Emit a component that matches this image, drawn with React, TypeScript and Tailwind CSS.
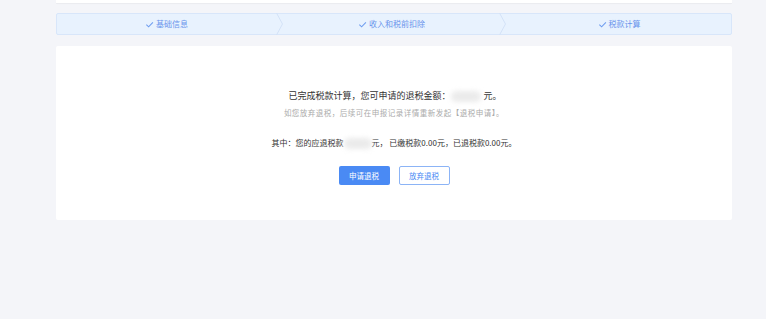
import React from "react";

const Check = () => (
  <svg width="9" height="9" viewBox="0 0 10 10" className="mr-[2px] inline-block">
    <path d="M1.5 5.2 L4 7.6 L8.8 2.6" fill="none" stroke="#6f9df0" strokeWidth="1.2" />
  </svg>
);

const Chevron = () => (
  <svg width="8" height="22" viewBox="0 0 8 22" className="shrink-0">
    <path d="M0.5 0 L6.5 11 L0.5 22" fill="none" stroke="#d3e2f7" strokeWidth="1" />
  </svg>
);

const Blur = ({ w }: { w: number }) => (
  <span
    className="inline-block h-[11px] rounded-full bg-[#ebebeb] blur-[2.5px] align-middle"
    style={{ width: w }}
  />
);

export default function App() {
  const font = { fontFamily: '"Noto Sans CJK SC", "Noto Sans", sans-serif' };
  return (
    <div className="w-[766px] h-[319px] bg-[#f4f5f9] overflow-hidden" style={font}>
      <div className="mx-[56px] w-[676px]">
        <div className="h-[3px] bg-white shadow-[0_1px_1px_rgba(0,0,0,0.04)]" />
        <div className="mt-[10px] h-[22px] flex items-center rounded-[2px] border border-[#d8e6fa] bg-[#e8f2fe] text-[8px] text-[#6894ec]">
          <div className="w-[219px] flex items-center justify-center">
            <Check />基础信息
          </div>
          <Chevron />
          <div className="flex-1 flex items-center justify-center">
            <Check />收入和税前扣除
          </div>
          <Chevron />
          <div className="w-[224px] flex items-center justify-center">
            <Check />税款计算
          </div>
        </div>
        <div className="mt-[11px] h-[174px] bg-white rounded-[2px] flex flex-col items-center">
          <div className="mt-[43px] h-[14px] flex items-center text-[9px] text-[#333333] pl-[2px]">
            已完成税款计算，您可申请的退税金额：
            <Blur w={30} />
            <span className="ml-[3px]">元。</span>
          </div>
          <div className="mt-[4px] h-[12px] flex items-center text-[7.5px] tracking-[0.5px] text-[#ababab]">
            如您放弃退税，后续可在申报记录详情重新发起【退税申请】。
          </div>
          <div className="mt-[18px] h-[12px] flex items-center text-[8px] text-[#333333]">
            其中：您的应退税款
            <Blur w={28} />
            元， 已缴税款0.00元，已退税款0.00元。
          </div>
          <div className="mt-[17px] flex gap-[9px]">
            <button className="w-[51px] h-[19px] rounded-[2px] bg-[#4a8af4] text-white text-[7.5px]">
              申请退税
            </button>
            <button className="w-[51px] h-[19px] rounded-[2px] border border-[#8cb4f6] bg-white text-[#4a8af4] text-[7.5px]">
              放弃退税
            </button>
          </div>
        </div>
      </div>
    </div>
  );
}
